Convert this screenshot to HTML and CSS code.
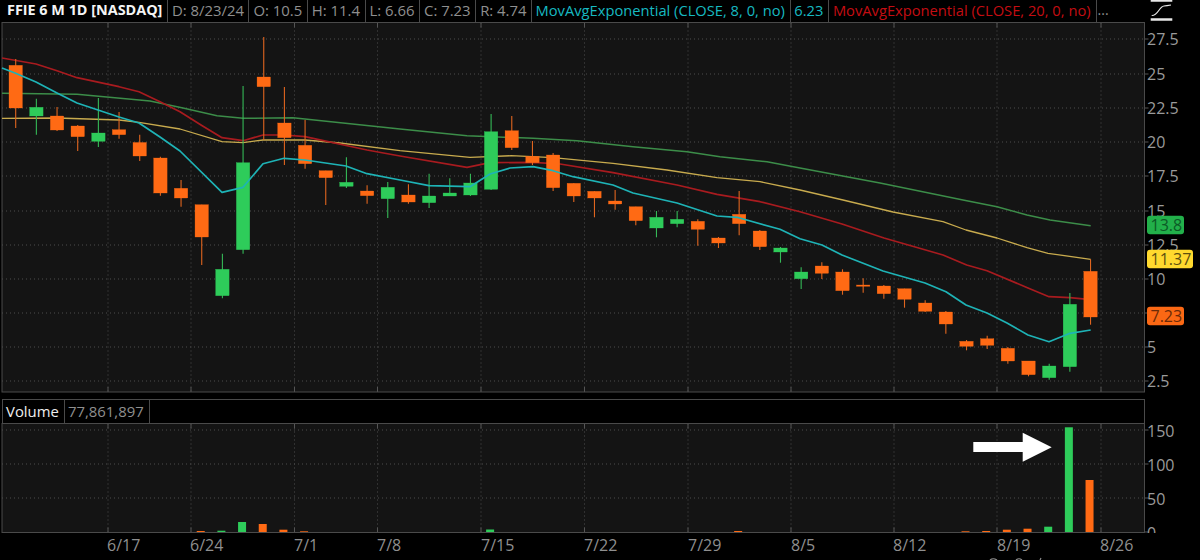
FILE: index.html
```html
<!DOCTYPE html>
<html lang="en">
<head>
<meta charset="utf-8">
<title>FFIE chart</title>
<link rel="stylesheet" href="styles.css">
</head>
<body>
<main class="window">
  <header class="legend">
    <span class="cell title">FFIE 6 M 1D [NASDAQ]</span>
    <span class="cell dim">D: 8/23/24</span>
    <span class="cell dim">O: 10.5</span>
    <span class="cell dim">H: 11.4</span>
    <span class="cell dim">L: 6.66</span>
    <span class="cell dim">C: 7.23</span>
    <span class="cell dim">R: 4.74</span>
    <span class="cell cyan">MovAvgExponential (CLOSE, 8, 0, no)</span>
    <span class="cell cyan">6.23</span>
    <span class="cell red">MovAvgExponential (CLOSE, 20, 0, no)</span>
    <span class="more dim">...</span>
    <svg class="study-icon" viewBox="0 0 24 24" width="24" height="24" aria-hidden="true">
      <path class="icon-bar" d="M1.700 0.500H23.300M1.700 19.500H23.300"/>
      <path class="icon-curve" d="M2.700 15.500C9 16 10 6.500 15 6C17 5.800 19 5.500 22 5"/>
    </svg>
  </header>
  <svg id="price" class="panel-price" width="1200" height="371" viewBox="0 22 1200 371"></svg>
  <div class="gap"></div>
  <div class="vol-head">
    <span class="vol-cell vol-name">Volume</span>
    <span class="vol-cell dim">77,861,897</span>
  </div>
  <svg id="volume" class="panel-volume" width="1200" height="110" viewBox="0 423 1200 110"></svg>
  <div class="dates">
    <span class="date d1">6/17</span>
    <span class="date d2">6/24</span>
    <span class="date d3">7/1</span>
    <span class="date d4">7/8</span>
    <span class="date d5">7/15</span>
    <span class="date d6">7/22</span>
    <span class="date d7">7/29</span>
    <span class="date d8">8/5</span>
    <span class="date d9">8/12</span>
    <span class="date d10">8/19</span>
    <span class="date d11">8/26</span>
    <svg class="cut-row" width="60" height="3" viewBox="0 0 60 3" aria-hidden="true">
      <path class="cut-marks" d="M1 3Q4 0.500 8 3M27 3Q30 0.500 33 3M51 3L52 1"/>
    </svg>
  </div>
</main>
<script src="script.js"></script>
</body>
</html>
```
FILE: styles.css
```css
* { box-sizing: border-box; }
html, body { margin: 0; padding: 0; background: #000; }
.window {
  width: 1200px;
  height: 560px;
  overflow: hidden;
  background: #000;
  display: flex;
  flex-direction: column;
  font-family: "Open Sans", "Noto Sans", sans-serif;
  font-size: 15px;
  color: #9a9a9a;
}
.legend {
  height: 22px;
  flex: none;
  display: flex;
  align-items: stretch;
  padding-left: 3px;
  line-height: 20px;
  white-space: nowrap;
  position: relative;
}
.cell {
  padding: 0 4.500px 0 4px;
  border-right: 1px solid #4a4a4a;
  font-size: 14.900px;
}
.title { color: #f4f4f4; font-weight: 700; font-size: 14.400px; }
.dim { color: #8f8f8f; }
.cyan { color: #17b9c0; font-size: 14.700px; padding: 0 5px 0 3.500px; }
.red { color: #c40d12; font-size: 14.700px; padding: 0 5px 0 3.500px; }
.more { padding-left: 1px; font-size: 14px; }
.study-icon { position: absolute; left: 1149px; top: 0; }
.icon-bar { stroke: #e8e8e8; stroke-width: 2.400; fill: none; }
.icon-curve { stroke: #e8e8e8; stroke-width: 1.200; fill: none; }
.panel-price, .panel-volume { display: block; flex: none; overflow: visible; }
.gap { height: 6px; flex: none; }
.vol-head {
  height: 24px;
  flex: none;
  width: 1143px;
  margin-left: 2px;
  display: flex;
  line-height: 23px;
  border: 1px solid #4a4a4a;
  border-bottom: none;
}
.vol-cell {
  padding: 0 5px 0 3px;
  border-right: 1px solid #4a4a4a;
  font-size: 14.900px;
}
.vol-name { color: #efefef; }
.dates {
  position: relative;
  flex: none;
  height: 27px;
  font-size: 16px;
  color: #8f8f8f;
  background: #000;
}
.date { position: absolute; top: 1px; }
.d1 { left: 107px; } .d2 { left: 190px; } .d3 { left: 294px; } .d4 { left: 377px; }
.d5 { left: 481px; } .d6 { left: 584px; } .d7 { left: 688px; } .d8 { left: 791px; }
.d9 { left: 893px; } .d10 { left: 997px; } .d11 { left: 1100px; }
.cut-row { position: absolute; left: 989px; top: 24px; }
.cut-marks { stroke: #8f8f8f; stroke-width: 1.200; fill: none; }

svg text { font-family: "Open Sans", "Noto Sans", sans-serif; }
.plot { fill: #141414; }
.frame { fill: none; stroke: #4a4a4a; stroke-width: 1; }
.grid { stroke: #4d4d4d; stroke-width: 1; stroke-dasharray: 1 3; }
.tick { stroke: #555; stroke-width: 1; }
.axis-label { fill: #9a9a9a; font-size: 16px; }
.up { fill: #2ecc5a; stroke: #2ecc5a; }
.down { fill: #ff6a14; stroke: #ff6a14; }
.wick { stroke-width: 1.100; fill: none; }
.wick.up { stroke: #35b957; }
.wick.down { stroke: #e0651f; }
.ma { fill: none; stroke-width: 1.500; stroke-linejoin: round; }
.ma-green { stroke: #3c8d49; }
.ma-yellow { stroke: #c8ab4e; stroke-width: 1.300; }
.ma-red { stroke: #a81b1f; stroke-width: 1.700; }
.ma-cyan { stroke: #1eb3b6; stroke-width: 1.700; }
.pill-text { font-size: 16px; }
.pill-green { fill: #22b04a; }
.pill-yellow { fill: #ffd92e; }
.pill-orange { fill: #fb6814; }
.ink-green { fill: #0c5a26; }
.ink-yellow { fill: #5e5010; }
.ink-orange { fill: #6b2a08; }
.arrow { fill: #fff; }
```
FILE: script.js
```js
var NS = 'http://www.w3.org/2000/svg';
function el(parent, name, attrs, text) {
  var e = document.createElementNS(NS, name);
  for (var k in attrs) e.setAttribute(k, attrs[k]);
  if (text) e.textContent = text;
  parent.appendChild(e);
  return e;
}
var ticks = [108, 191, 294.5, 377.5, 481, 584.5, 688, 791, 894, 997, 1101];
var price = document.getElementById('price');
var L = 2, R = 1144.5, PT = 22.5, PB = 392;
el(price, 'rect', {class: 'plot', x: L, y: PT, width: R - L, height: PB - PT});
var pLabels = [['27.5', 39], ['25', 74], ['22.5', 108], ['20', 142], ['17.5', 176], ['15', 211], ['12.5', 245], ['10', 279], ['', 313], ['5', 347], ['2.5', 381]];
pLabels.forEach(function (p) {
  el(price, 'line', {class: 'grid', x1: L, x2: R, y1: p[1], y2: p[1]});
  el(price, 'line', {class: 'tick', x1: R, x2: R + 4, y1: p[1], y2: p[1]});
});
ticks.forEach(function (x) {
  el(price, 'line', {class: 'grid', x1: x, x2: x, y1: PT, y2: PB});
  el(price, 'line', {class: 'tick', x1: x, x2: x, y1: PT, y2: PT + 5});
  el(price, 'line', {class: 'tick', x1: x, x2: x, y1: PB - 5, y2: PB});
});
el(price, 'rect', {class: 'frame', x: L, y: PT, width: R - L, height: PB - PT});

var green = [[2,93.3],[77,94.3],[150,101],[183,108],[217,115.7],[243,118.3],[293,117.7],[400,129],[467,135.7],[533,138.3],[577,140.7],[633,146.7],[687,151.7],[720,156.7],[767,161.7],[800,168],[880,183],[963,200],[997,206.7],[1027,215],[1050,220],[1090.7,225.7]];
var yellow = [[2,118.3],[57,118],[119,120],[139,122.3],[180,129],[222,141.7],[243,142.7],[263,140],[305,140],[340,143],[400,150.7],[470,157.3],[511,155.7],[553,157.7],[613,163.3],[667,170],[717,177.7],[760,181.7],[800,190],[843,200],[893,212],[943,221.7],[966,230],[997,238],[1027,247.7],[1048,253.3],[1090.7,259.3]];
var red = [[2,58],[36,64],[57,70.7],[77,77.7],[119,86.7],[139,91.7],[160,101.7],[180,111.7],[201,125],[222,137.7],[243,140.7],[263,135],[284,135],[305,136.7],[367,150],[400,156],[467,167.3],[490,162.7],[533,162.3],[560,164],[613,172.7],[677,185],[717,194.3],[760,201.7],[800,211.7],[842,224],[884,238],[943,255],[966.7,265],[987,270.7],[1028,288],[1049,296.7],[1070,297.7],[1090.7,299.7]];
var cyan = [[2,68],[15,73],[36,82],[57,93],[77,103],[98,110],[119,117],[139,123],[160,137],[180,151],[222,192.3],[243,187.3],[263,163.7],[284,158.3],[305,160],[346,166],[367,173.7],[400,180],[429,185.7],[470,186.7],[490,174],[510,168],[533,166.7],[553,170.7],[573,176.7],[613,185],[633,193],[677,203],[717,216],[737,217.3],[780,229.3],[800,238.7],[822,245],[842,255],[883,271],[925,283],[946,291.7],[966,305],[987,313],[1007,323],[1028,335],[1049,341.7],[1070,333.3],[1090.7,330]];

// colour, body top, body bottom, wick high, wick low
var candles = [
['d',65.3,108,59,128],['u',107.3,116,98.7,134.7],['d',116,130,107,131],['d',126,136.7,125,151],['u',133,141.3,98,147],
['d',129.7,134.7,112,138.7],['d',142.5,156,134.7,161],['d',158,193,156.7,195.7],['d',188.3,198,180,206.7],['d',204.7,237,204.7,265],
['u',269.3,295.7,253.7,298.3],['u',162.7,249.7,86,253.7],['d',77,86.7,37,140],['d',123,137.7,87,165],['d',145.3,163.7,120,168.7],
['d',170.7,177.7,170.7,205],['u',182.3,186.3,157.3,188],['d',191,195.7,185.3,203.7],['u',187.3,198.7,182,218],['d',195,202,184.3,203.7],
['u',196,202.7,173.7,208],['u',193,196,178.3,196],['u',183,195,173.7,196],['u',131.7,189.3,114,190],['d',130.7,147.7,116,150],
['d',156.3,162.7,141,165],['d',155,187.7,153,191],['d',183.3,196,183.3,202],['d',191.3,198,191.3,217.3],['d',201,204,190,209.7],
['d',206.7,220.7,206.7,225.3],['u',217.3,228,211,237.3],['u',219.3,223.7,211,227.3],['d',221.3,229.3,219.3,245.7],['d',238,243,237,248],
['d',214.3,223.7,191,235.3],['d',231,246.7,230,250],['u',248,252,247,262.7],['u',272,278.7,267.3,289],['d',266,273.3,262.3,279],
['d',272,290.7,269.3,294.7],['d',285,286.3,278.3,292.7],['d',286,293.7,285,298.7],['d',288.7,299.3,288.7,307.7],['d',303,311.3,300.3,312],
['d',312,324,311,333.7],['d',341.3,346.3,340,350.3],['d',338.7,345.3,335.7,349],['d',348.3,361,347,363.7],['d',361,374.7,361,376.3],
['u',366,377.7,363.7,379.7],['u',304.3,366.7,293,371.7],['d',271.3,317,259.3,324.7]
];
function cx(i) { return 15.7 + 20.67 * i; }

function poly(cls, pts) {
  el(price, 'polyline', {class: 'ma ' + cls, points: pts.map(function (p) { return p.join(','); }).join(' ')});
}
poly('ma-green', green);
poly('ma-yellow', yellow);
poly('ma-red', red);
var W = 13.4;
candles.forEach(function (c, i) {
  var x = cx(i), cl = c[0] === 'u' ? 'up' : 'down';
  el(price, 'line', {class: 'wick ' + cl, x1: x, x2: x, y1: c[3], y2: c[4]});
  el(price, 'rect', {class: cl, x: x - W / 2, y: c[1], width: W, height: Math.max(c[2] - c[1], 1), 'stroke-width': 0.3});
});
poly('ma-cyan', cyan);

pLabels.forEach(function (p) {
  if (p[0]) el(price, 'text', {class: 'axis-label', x: 1147, y: p[1] + 6}, p[0]);
});
function pill(y, w, tone, s) {
  el(price, 'rect', {class: 'pill-' + tone, x: 1147, y: y - 9.3, width: w, height: 18.6, rx: 3});
  el(price, 'text', {class: 'pill-text ink-' + tone, x: 1150.5, y: y + 6}, s);
}
pill(225, 37, 'green', '13.8');
pill(259, 46, 'yellow', '11.37');
pill(316, 37, 'orange', '7.23');

var vol = document.getElementById('volume');
var VT = 423.5, VB = 532.5;
el(vol, 'rect', {class: 'plot', x: L, y: VT, width: R - L, height: VB - VT});
[['150', 430], ['100', 464], ['50', 498], ['0', 532]].forEach(function (p) {
  if (p[1] < 530) el(vol, 'line', {class: 'grid', x1: L, x2: R, y1: p[1], y2: p[1]});
  el(vol, 'line', {class: 'tick', x1: R, x2: R + 4, y1: p[1], y2: p[1]});
  el(vol, 'text', {class: 'axis-label', x: 1147, y: p[1] + 6.5}, p[0]);
});
ticks.forEach(function (x) {
  el(vol, 'line', {class: 'grid', x1: x, x2: x, y1: VT, y2: VB});
  el(vol, 'line', {class: 'tick', x1: x, x2: x, y1: VT, y2: VT + 5});
  el(vol, 'line', {class: 'tick', x1: x, x2: x, y1: VB - 5, y2: VB});
});
// candle index, colour, top y
var bars = [[9,'d',531],[10,'u',530.7],[11,'u',522],[12,'d',524],[13,'d',529.7],[14,'d',531.3],[23,'u',529.5],[35,'d',531],[46,'d',531.3],[47,'d',531],[48,'d',529.7],[49,'d',528.7],[50,'u',526.7],[51,'u',427.3],[52,'d',480]];
bars.forEach(function (b) {
  el(vol, 'rect', {class: b[1] === 'u' ? 'up' : 'down', x: cx(b[0]) - 5, y: b[2], width: 8, height: VB - b[2], 'stroke-width': 0});
});
el(vol, 'path', {class: 'arrow', d: 'M973.300 442H1022.700V432.700L1051.700 447.300L1022.700 461.700V452H973.300Z'});
el(vol, 'rect', {class: 'frame', x: L, y: VT, width: R - L, height: VB - VT});
```
